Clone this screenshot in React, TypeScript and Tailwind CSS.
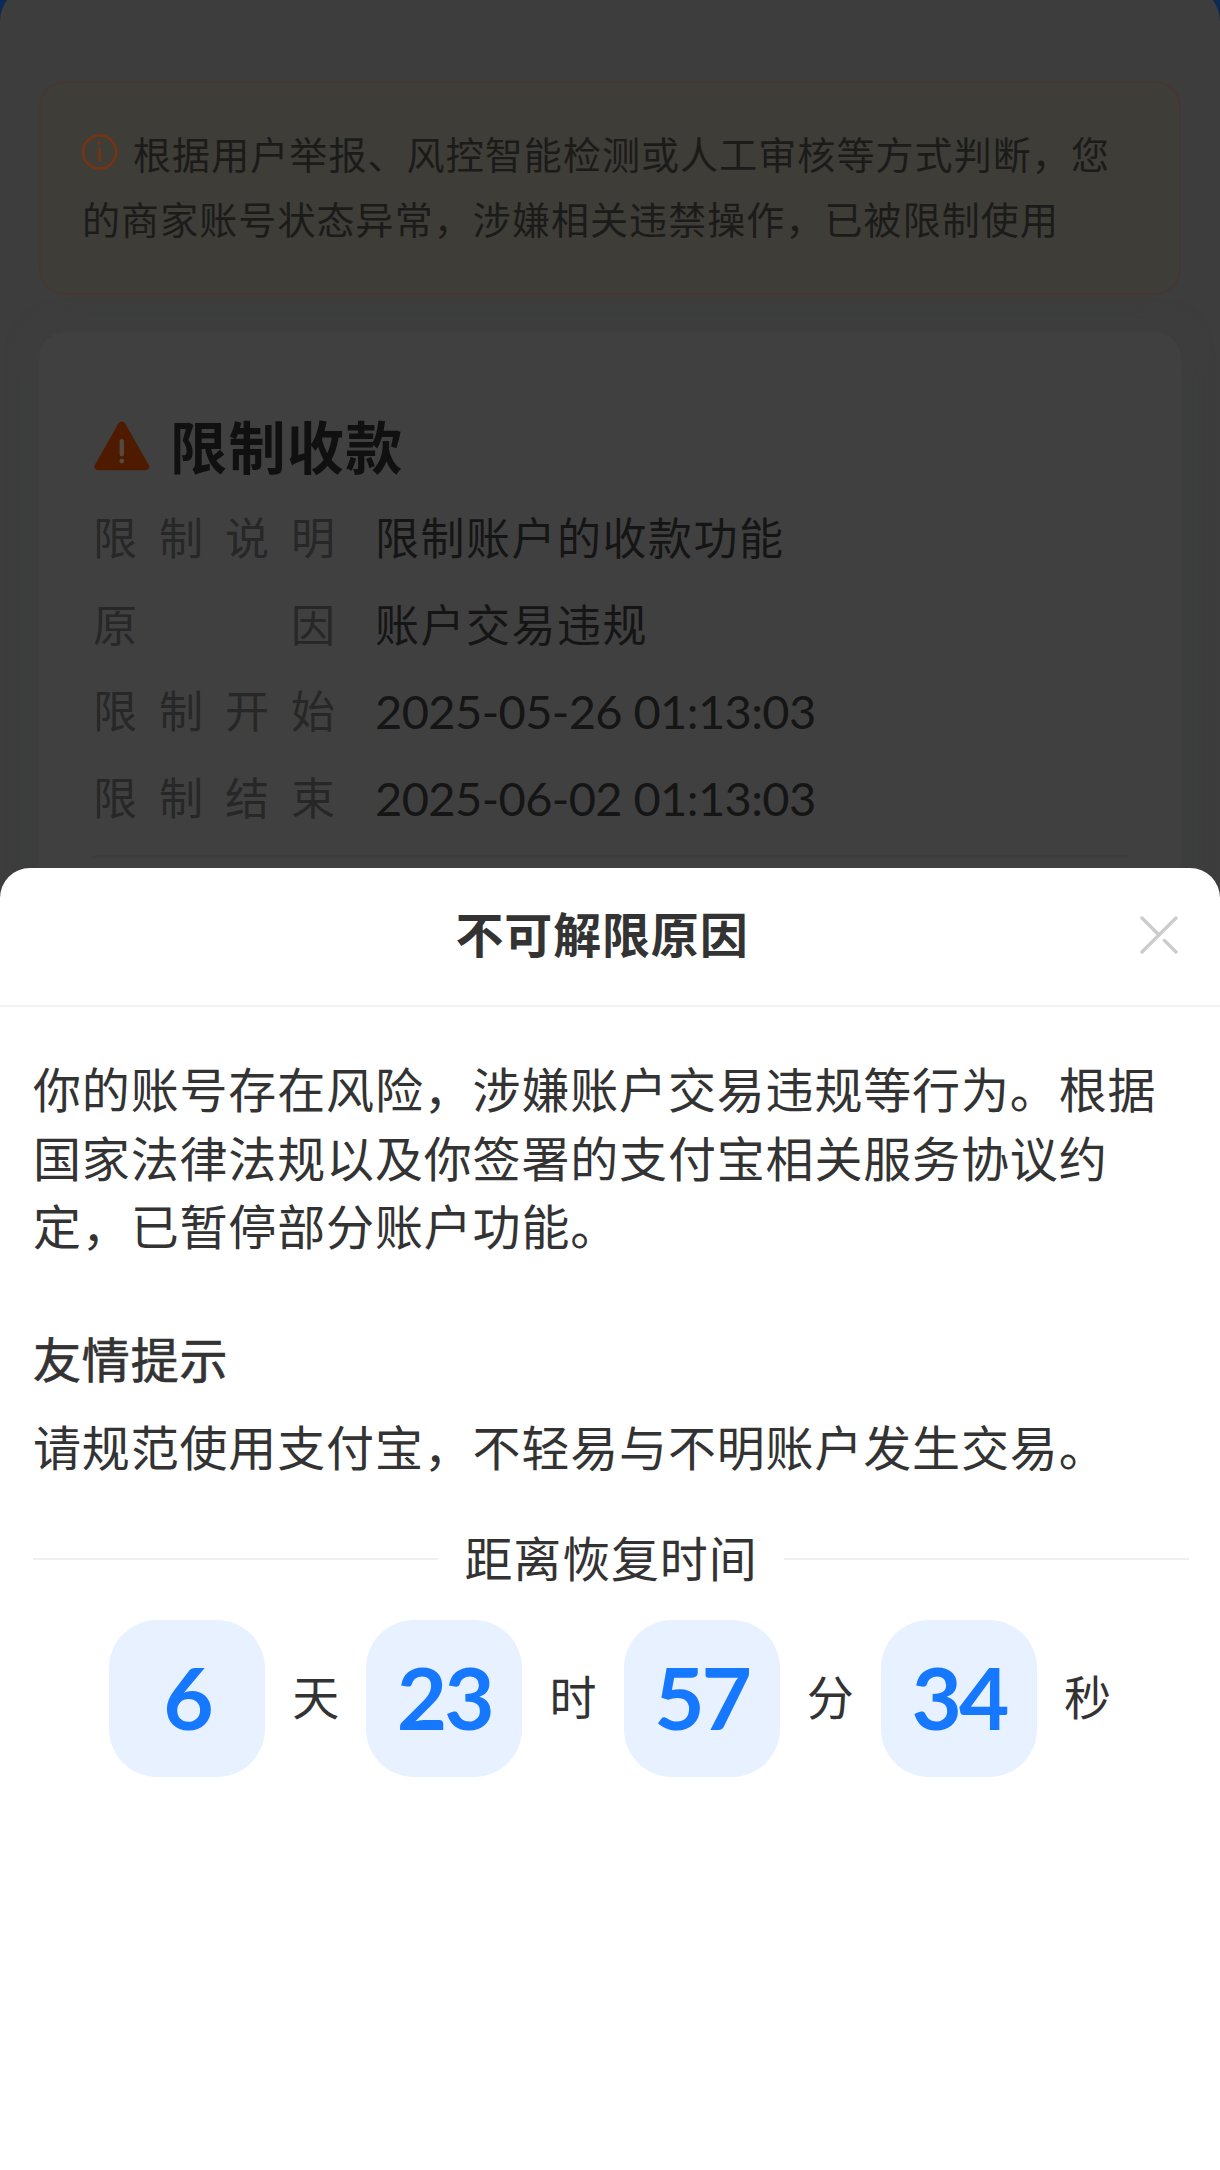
import { useState } from "react";

const restrictions = [
  { label: "限制说明", value: "限制账户的收款功能" },
  { label: "原因", value: "账户交易违规" },
  { label: "限制开始", value: "2025-05-26 01:13:03", date: true },
  { label: "限制结束", value: "2025-06-02 01:13:03", date: true }
];

const countdown = [
  { value: "6", unit: "天" },
  { value: "23", unit: "时" },
  { value: "57", unit: "分" },
  { value: "34", unit: "秒" }
];

function InfoIcon() {
  return (
    <svg
      className="mr-[15px] inline-block h-9 w-9 align-[-1px]"
      viewBox="0 0 36 36"
      fill="none"
      stroke="#763410"
      strokeWidth="2.6"
    >
      <circle cx="17.6" cy="18" r="16.5" />
      <path d="M17.6 13.4v14.4" strokeWidth="2.8" />
      <circle cx="17.6" cy="8.6" r="1.8" fill="#763410" stroke="none" />
    </svg>
  );
}

function WarningIcon() {
  return (
    <svg className="mb-1 h-[50px] w-[58px]" viewBox="0 0 58 50">
      <path d="M25.4 2.4a4 4 0 0 1 6.8 0l23.6 41.6a3.6 3.6 0 0 1-3.1 5.3H4.9a3.6 3.6 0 0 1-3.1-5.3z" fill="#4f1b00" />
      <path d="M28.8 20.2v13" stroke="#55493f" strokeWidth="4.4" strokeLinecap="round" />
      <circle cx="28.8" cy="40" r="2.4" fill="#55493f" />
    </svg>
  );
}

function CloseIcon() {
  return (
    <svg
      className="mb-[3px] h-[38px] w-[38px]"
      viewBox="0 0 38 38"
      fill="none"
      stroke="#cccccc"
      strokeWidth="3.4"
      strokeLinecap="round"
    >
      <path d="M36 2 2 36M2 2l17 17M24.5 24.5 36 36" />
    </svg>
  );
}

function RestrictionPage() {
  return (
    <div className="h-[900px] bg-[#0b2a55]">
      <div className="-mt-[13px] h-full rounded-t-[34px] bg-[#3d3d3d] px-[39px] pt-[94px]">
        <div className="h-[214px] rounded-[26px] border-2 border-[#453832] bg-[#3e3d38] pt-[39px] pl-[41px] text-[38px] leading-[65px] tracking-[1.08px] whitespace-nowrap text-[#1b1b1a]">
          <p>
            <InfoIcon />
            根据用户举报、风控智能检测或人工审核等方式判断，您
          </p>
          <p>的商家账号状态异常，涉嫌相关违禁操作，已被限制使用</p>
        </div>

        <div className="mt-[37px] h-[600px] rounded-[26px] bg-[#404040] px-[54px] pt-[81px] shadow-[0_0_30px_#3c3e3d]">
          <div className="flex h-[70px] items-center gap-[19px]">
            <WarningIcon />
            <h1 className="text-[57px] font-bold tracking-[1.4px] text-[#101010]">限制收款</h1>
          </div>
          <dl className="mt-[12px]">
            {restrictions.map((item) => (
              <div className="flex h-[86.5px] items-center text-[44px]" key={item.label}>
                <dt className="flex w-[242px] justify-between text-[#272727]">
                  {item.label.split("").map((char) => (
                    <span key={char}>{char}</span>
                  ))}
                </dt>
                <dd
                  className={
                    item.date
                      ? "ml-[40px] text-[47px] tracking-[-0.6px] text-[#151515]"
                      : "ml-[40px] tracking-[1.5px] text-[#151515]"
                  }
                >
                  {item.value}
                </dd>
              </div>
            ))}
          </dl>
          <div className="mt-[14px] h-[3px] bg-[#3d3d3d]" />
        </div>
      </div>
    </div>
  );
}

function ReasonSheet({ onClose }: { onClose: () => void }) {
  return (
    <section className="absolute inset-x-0 top-[868px] bottom-0 rounded-t-[30px] bg-white text-[48px] tracking-[0.84px] text-[#333333]">
      <header className="flex h-[139px] items-center justify-between border-b-2 border-[#f2f2f2] pr-[42px] pl-[64px]">
        <h2 className="mb-[3px] flex-1 text-center font-bold">不可解限原因</h2>
        <button onClick={onClose} type="button" aria-label="关闭">
          <CloseIcon />
        </button>
      </header>

      <div className="pt-[49px] pr-[31px] pl-[33px] whitespace-nowrap">
        <p className="leading-[68.5px]">
          你的账号存在风险，涉嫌账户交易违规等行为。根据
          <br />
          国家法律法规以及你签署的支付宝相关服务协议约
          <br />
          定，已暂停部分账户功能。
        </p>
        <h3 className="mt-[64px] leading-[68px] [-webkit-text-stroke:0.7px_#333333]">友情提示</h3>
        <p className="mt-5 leading-[68px]">请规范使用支付宝，不轻易与不明账户发生交易。</p>

        <div className="mt-[43px] flex h-[68px] items-center gap-[26px]">
          <span className="h-0.5 flex-1 bg-[#f0f0f0]" />
          <span>距离恢复时间</span>
          <span className="h-0.5 flex-1 bg-[#f0f0f0]" />
        </div>
      </div>

      <div className="mt-[27px] flex pl-[109px]">
        {countdown.map((item) => (
          <div className="flex items-center" key={item.unit}>
            <span className="flex h-[157px] w-[156px] items-center justify-center rounded-[48px] bg-[#e7f1ff] pb-0.5 font-[Lato] text-[87px] font-bold tracking-[-3px] text-[#1677ff]">
              {item.value}
            </span>
            <span className="mb-0.5 w-[101.3px] text-center text-[47px] tracking-normal">{item.unit}</span>
          </div>
        ))}
      </div>
    </section>
  );
}

export default function App() {
  const [open, setOpen] = useState(true);

  return (
    <main className="relative h-[2170px] w-[1220px] overflow-hidden bg-[#3d3d3d] font-[Lato,'Noto_Sans_CJK_SC',sans-serif]">
      <RestrictionPage />
      {open && <ReasonSheet onClose={() => setOpen(false)} />}
    </main>
  );
}
